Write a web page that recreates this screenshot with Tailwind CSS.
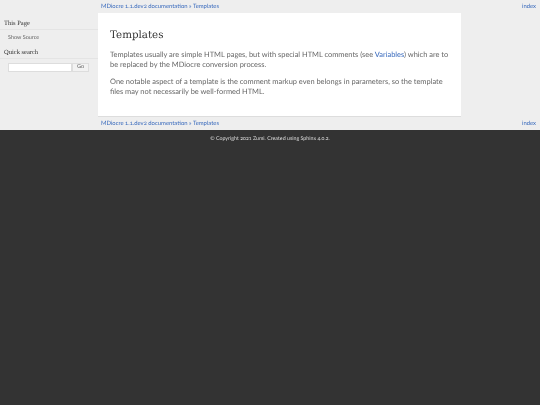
<!DOCTYPE html>
<html lang="en">
  <head>
    <meta charset="UTF-8" />
    <meta name="viewport" content="width=device-width, initial-scale=1.0" />
    <title>Templates</title>
    <script src="https://cdn.jsdelivr.net/npm/@tailwindcss/browser@4"></script>
  </head>
  <body class="bg-[#333333] h-[405px] overflow-hidden font-['Lato',sans-serif] text-[#666666] [font-variant-numeric:oldstyle-nums] [text-rendering:geometricPrecision]">
    <div class="[will-change:opacity]">
    <div class="bg-[#eeeeee] h-[130px] flex">
      <!-- sidebar -->
      <div class="w-[98px] shrink-0 pt-[18px]">
        <h3 class="font-['Liberation_Serif',serif] text-[6.5px] leading-[11px] text-[#333333] pl-1 border-b border-[#e4e4e4]">This Page</h3>
        <p class="text-[5.5px] leading-[8px] pl-2 mt-[4px] text-[#666666]">Show Source</p>
        <h3 class="font-['Liberation_Serif',serif] text-[6.5px] leading-[11px] text-[#333333] pl-1 mt-[5px] border-b border-[#e4e4e4]">Quick search</h3>
        <div class="flex pl-2 mt-[4px]">
          <div class="w-[64px] h-[9px] bg-white border border-[#dddddd]"></div>
          <div class="w-[17px] h-[9px] bg-[#f2f2f2] border border-[#dddddd] text-[5.5px] leading-[7px] text-center">Go</div>
        </div>
      </div>
      <!-- main column -->
      <div class="flex-1 min-w-0">
        <div class="h-[13px] flex justify-between px-[3px] pr-[4px] text-[5.9px] leading-[13px] text-[#3a6bbd]">
          <span>MDiocre 1.1.dev2 documentation » Templates</span>
          <span>index</span>
        </div>
        <div class="w-[363px] h-[104px] bg-white border-b border-[#dddddd] pl-[12px] pr-[8px] pt-[14px]">
          <h1 class="font-['DejaVu_Serif',serif] text-[10.3px] leading-[16px] text-[#333333]">Templates</h1>
          <p class="text-[7.45px] leading-[10px] mt-[7px]">Templates usually are simple HTML pages, but with special HTML comments (see <span class="text-[#3a6bbd]">Variables</span>) which are to be replaced by the MDiocre conversion process.</p>
          <p class="text-[7.45px] leading-[10px] mt-[7px]">One notable aspect of a template is the comment markup even belongs in parameters, so the template files may not necessarily be well-formed HTML.</p>
        </div>
        <div class="h-[13px] flex justify-between px-[3px] pr-[4px] text-[5.9px] leading-[14.5px] text-[#3a6bbd]">
          <span>MDiocre 1.1.dev2 documentation » Templates</span>
          <span>index</span>
        </div>
      </div>
    </div>
    <div class="text-center text-[5.3px] leading-[8px] text-[#dddddd] pt-[5px]">© Copyright 2021 Zumi. Created using Sphinx 4.0.2.</div>
    </div>
  </body>
</html>
